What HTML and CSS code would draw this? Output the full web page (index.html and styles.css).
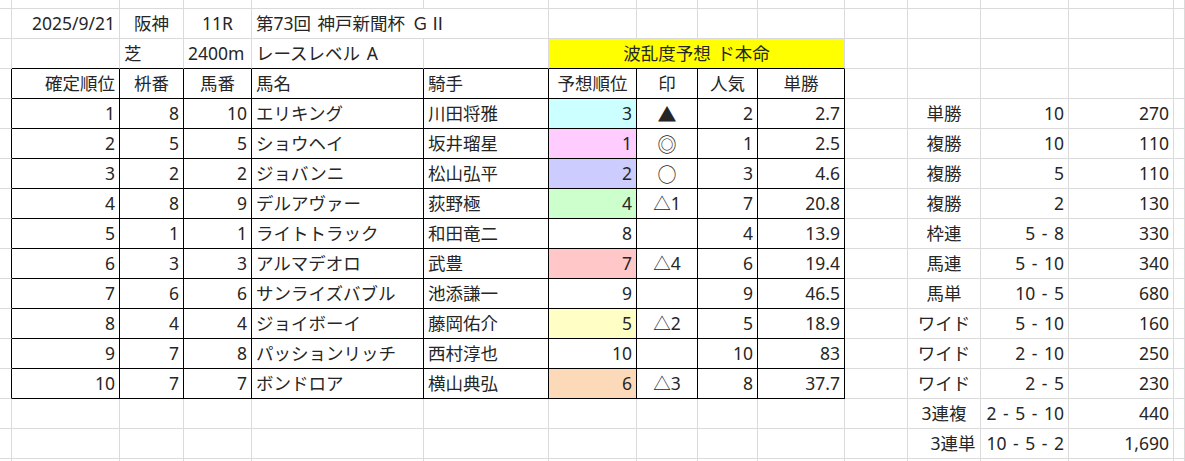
FILE: index.html
```html
<!DOCTYPE html>
<html lang="ja">
<head>
<meta charset="utf-8">
<title>神戸新聞杯 結果</title>
<link rel="stylesheet" href="styles.css">
</head>
<body>
<div class="sheet">
  <!-- row 0 (partial) -->
  <div></div><div></div><div></div><div></div><div></div><div></div><div></div><div></div><div></div><div></div><div></div><div></div><div></div><div></div><div></div>

  <!-- row 1 -->
  <div></div>
  <div class="r">2025/9/21</div>
  <div class="m">阪神</div>
  <div class="m">11R</div>
  <div class="span2">第73回 神戸新聞杯 ＧⅡ</div>
  <div></div><div></div><div></div><div></div><div></div><div></div><div></div><div></div><div></div>

  <!-- row 2 -->
  <div></div>
  <div class="tb"></div>
  <div class="tb">芝</div>
  <div class="tb">2400m</div>
  <div class="tb">レースレベル A</div>
  <div class="tb"></div>
  <div class="span4 m tb yellow">波乱度予想 ド本命</div>
  <div></div><div></div><div></div><div></div><div></div>

  <!-- row 3 header -->
  <div class="tl"></div>
  <div class="t r">確定順位</div>
  <div class="t m">枡番</div>
  <div class="t m">馬番</div>
  <div class="t">馬名</div>
  <div class="t">騎手</div>
  <div class="t m">予想順位</div>
  <div class="t m">印</div>
  <div class="t m">人気</div>
  <div class="t m">単勝</div>
  <div></div><div></div><div></div><div></div><div></div>

  <!-- row 4 -->
  <div class="tl"></div>
  <div class="t r">1</div><div class="t r">8</div><div class="t r">10</div>
  <div class="t">エリキング</div><div class="t">川田将雅</div>
  <div class="t r bg-cyan">3</div><div class="t m mk">▲</div><div class="t r">2</div><div class="t r">2.7</div>
  <div></div><div class="m">単勝</div><div class="r">10</div><div class="r">270</div><div></div>

  <!-- row 5 -->
  <div class="tl"></div>
  <div class="t r">2</div><div class="t r">5</div><div class="t r">5</div>
  <div class="t">ショウヘイ</div><div class="t">坂井瑠星</div>
  <div class="t r bg-pink">1</div><div class="t m mk">◎</div><div class="t r">1</div><div class="t r">2.5</div>
  <div></div><div class="m">複勝</div><div class="r">10</div><div class="r">110</div><div></div>

  <!-- row 6 -->
  <div class="tl"></div>
  <div class="t r">3</div><div class="t r">2</div><div class="t r">2</div>
  <div class="t">ジョバンニ</div><div class="t">松山弘平</div>
  <div class="t r bg-lav">2</div><div class="t m mk">○</div><div class="t r">3</div><div class="t r">4.6</div>
  <div></div><div class="m">複勝</div><div class="r">5</div><div class="r">110</div><div></div>

  <!-- row 7 -->
  <div class="tl"></div>
  <div class="t r">4</div><div class="t r">8</div><div class="t r">9</div>
  <div class="t">デルアヴァー</div><div class="t">荻野極</div>
  <div class="t r bg-green">4</div><div class="t m">△1</div><div class="t r">7</div><div class="t r">20.8</div>
  <div></div><div class="m">複勝</div><div class="r">2</div><div class="r">130</div><div></div>

  <!-- row 8 -->
  <div class="tl"></div>
  <div class="t r">5</div><div class="t r">1</div><div class="t r">1</div>
  <div class="t">ライトトラック</div><div class="t">和田竜二</div>
  <div class="t r">8</div><div class="t m"></div><div class="t r">4</div><div class="t r">13.9</div>
  <div></div><div class="m">枠連</div><div class="r">5 - 8</div><div class="r">330</div><div></div>

  <!-- row 9 -->
  <div class="tl"></div>
  <div class="t r">6</div><div class="t r">3</div><div class="t r">3</div>
  <div class="t">アルマデオロ</div><div class="t">武豊</div>
  <div class="t r bg-rose">7</div><div class="t m">△4</div><div class="t r">6</div><div class="t r">19.4</div>
  <div></div><div class="m">馬連</div><div class="r">5 - 10</div><div class="r">340</div><div></div>

  <!-- row 10 -->
  <div class="tl"></div>
  <div class="t r">7</div><div class="t r">6</div><div class="t r">6</div>
  <div class="t">サンライズバブル</div><div class="t">池添謙一</div>
  <div class="t r">9</div><div class="t m"></div><div class="t r">9</div><div class="t r">46.5</div>
  <div></div><div class="m">馬単</div><div class="r">10 - 5</div><div class="r">680</div><div></div>

  <!-- row 11 -->
  <div class="tl"></div>
  <div class="t r">8</div><div class="t r">4</div><div class="t r">4</div>
  <div class="t">ジョイボーイ</div><div class="t">藤岡佑介</div>
  <div class="t r bg-yel">5</div><div class="t m">△2</div><div class="t r">5</div><div class="t r">18.9</div>
  <div></div><div class="m">ワイド</div><div class="r">5 - 10</div><div class="r">160</div><div></div>

  <!-- row 12 -->
  <div class="tl"></div>
  <div class="t r">9</div><div class="t r">7</div><div class="t r">8</div>
  <div class="t">パッションリッチ</div><div class="t">西村淳也</div>
  <div class="t r">10</div><div class="t m"></div><div class="t r">10</div><div class="t r">83</div>
  <div></div><div class="m">ワイド</div><div class="r">2 - 10</div><div class="r">250</div><div></div>

  <!-- row 13 -->
  <div class="tl"></div>
  <div class="t r">10</div><div class="t r">7</div><div class="t r">7</div>
  <div class="t">ボンドロア</div><div class="t">横山典弘</div>
  <div class="t r bg-peach">6</div><div class="t m">△3</div><div class="t r">8</div><div class="t r">37.7</div>
  <div></div><div class="m">ワイド</div><div class="r">2 - 5</div><div class="r">230</div><div></div>

  <!-- row 14 -->
  <div></div>
  <div></div><div></div><div></div><div></div><div></div><div></div><div></div><div></div><div></div>
  <div></div><div class="m">3連複</div><div class="r">2 - 5 - 10</div><div class="r">440</div><div></div>

  <!-- row 15 -->
  <div></div>
  <div></div><div></div><div></div><div></div><div></div><div></div><div></div><div></div><div></div>
  <div></div><div class="m shift">3連単</div><div class="r">10 - 5 - 2</div><div class="r">1,690</div><div></div>

  <!-- row 16 -->
  <div></div><div></div><div></div><div></div><div></div><div></div><div></div><div></div><div></div><div></div><div></div><div></div><div></div><div></div><div></div>
</div>
</body>
</html>
```

FILE: styles.css
```css
html, body {
  margin: 0;
  padding: 0;
  background: #ffffff;
}

body {
  font-family: "Noto Sans", "Noto Sans CJK JP", sans-serif;
  font-size: 17.5px;
  color: #262626;
  overflow: hidden;
}

.sheet {
  display: grid;
  grid-template-columns: 12px 108px 64px 68px 172px 125px 88px 61px 60px 87px 63px 73px 88px 105px 1fr;
  grid-template-rows: 9px repeat(16, 30px);
  width: 1185px;
}

.sheet > div {
  box-sizing: border-box;
  border-right: 1px solid #dadada;
  border-bottom: 1px solid #dadada;
  display: flex;
  align-items: center;
  padding: 0 4px;
  white-space: pre;
  word-spacing: 2px;
  overflow: hidden;
  line-height: 1;
}

.sheet > .r { justify-content: flex-end; }
.sheet > .m { justify-content: center; }
.sheet > .shift { padding-left: 22px; }

.span2 { grid-column: span 2; }
.span4 { grid-column: span 4; }

.sheet > .t {
  border-right-color: #000000;
  border-bottom-color: #000000;
}
.sheet > .tb { border-bottom-color: #000000; }
.sheet > .tl { border-right-color: #000000; }

.yellow { background: #ffff00; }
.bg-cyan { background: #ccffff; }
.bg-pink { background: #ffccff; }
.bg-lav { background: #ccccff; }
.bg-green { background: #ccffcc; }
.bg-rose { background: #ffc7c7; }
.bg-yel { background: #ffffc5; }
.bg-peach { background: #fcd9b8; }

.mk { font-size: 19px; font-family: "Noto Sans CJK JP", sans-serif; }
```
